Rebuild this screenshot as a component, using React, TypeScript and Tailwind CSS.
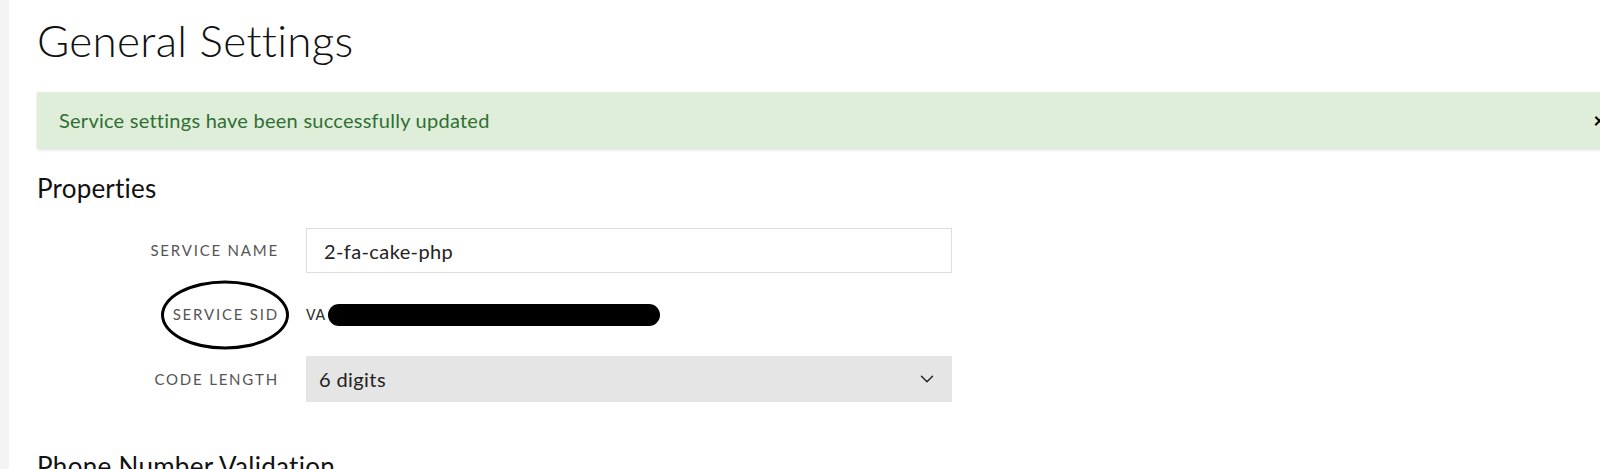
import React from 'react';
import { ChevronDown } from 'lucide-react';

const font = { fontFamily: 'Lato, "Open Sans", sans-serif' };

const FieldRow: React.FC<{ label: string; children: React.ReactNode; circled?: boolean; className?: string }> = ({
  label,
  children,
  circled,
  className,
}) => (
  <div className={`flex items-center ${className ?? ''}`}>
    <div className="w-[242px] shrink-0 flex justify-end">
      <span className="relative text-[15px] tracking-[0.12em] text-[#555] uppercase">
        {label}
        {circled && (
          <span className="absolute left-[-12px] right-[-10px] top-1/2 -translate-y-1/2 h-[69px] rounded-[50%] border-[3px] border-black pointer-events-none" />
        )}
      </span>
    </div>
    <div className="ml-[27px]">{children}</div>
  </div>
);

export default function App() {
  return (
    <div className="h-[469px] w-[1600px] overflow-hidden flex bg-white" style={font}>
      {/* strip on the left edge */}
      <div className="w-[9px] shrink-0 bg-[#f4f4f4]" />

      <main className="flex-1 pl-[28px] pt-[14px]">
        <h1 className="text-[44px] leading-[52px] font-light tracking-[0.3px] text-[#111]">General Settings</h1>

        {/* success banner */}
        <div className="mt-[26px] h-[56px] w-[1600px] flex items-center justify-between bg-[#dfeed9] pl-[22px] shadow-[0_2px_3px_rgba(0,0,0,0.13)]">
          <span className="text-[20px] tracking-[0.25px] text-[#2f6e35]">Service settings have been successfully updated</span>
          <span className="mr-[32px] text-[20px] font-bold text-black">×</span>
        </div>

        <h2 className="mt-[25px] text-[26px] leading-[30px] tracking-[0.2px] text-[#111]">Properties</h2>

        <FieldRow label="Service Name" className="mt-[25px]">
          <div className="w-[646px] h-[45px] border border-[#ddd] flex items-center px-[17px] text-[20px] tracking-[0.4px] text-[#222]">
            2-fa-cake-php
          </div>
        </FieldRow>

        <FieldRow label="Service SID" circled className="h-[83px]">
          <div className="flex items-center h-[24px]">
            <span
              className="w-[22px] text-[16px] leading-none text-[#333] translate-y-[1px]"
              style={{ fontFamily: '"Liberation Mono", monospace' }}
            >
              VA
            </span>
            <span className="h-[22px] w-[332px] rounded-full bg-black" />
          </div>
        </FieldRow>

        <FieldRow label="Code Length">
          <div className="w-[646px] h-[46px] bg-[#e5e5e5] flex items-center justify-between pl-[13px] pr-[14px] text-[20px] tracking-[0.4px] text-[#222]">
            <span>6 digits</span>
            <ChevronDown size={22} strokeWidth={1.6} className="text-[#222]" />
          </div>
        </FieldRow>

        <h2 className="mt-[49px] text-[26px] leading-[30px] tracking-[0.3px] text-[#111]">Phone Number Validation</h2>
      </main>
    </div>
  );
}
